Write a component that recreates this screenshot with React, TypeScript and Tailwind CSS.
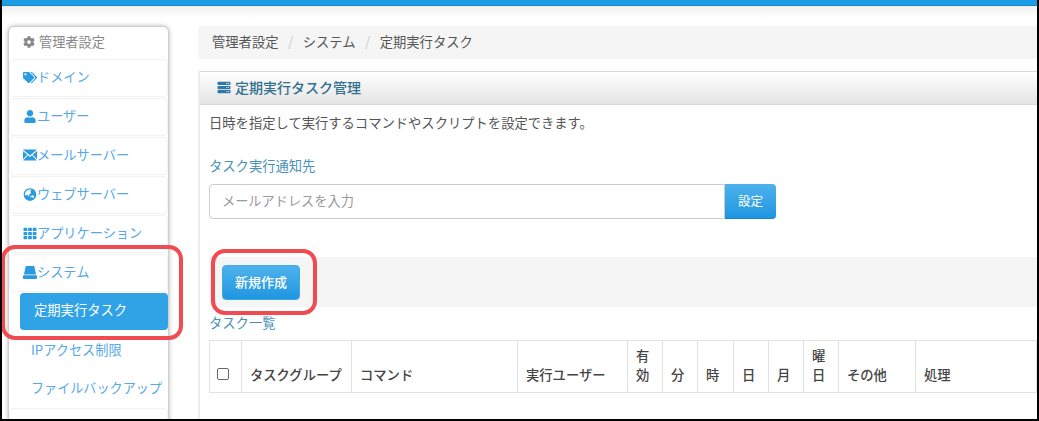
import { FaCog, FaGlobeAsia, FaServer, FaTags, FaTh, FaUser } from 'react-icons/fa';

const font = { fontFamily: '"Noto Sans CJK JP", "Liberation Sans", sans-serif' };

function EnvelopeIcon() {
  return (
    <svg viewBox="0 0 14 12" className="w-[14px] h-[12px]" fill="currentColor">
      <path d="M0 0.5h14L7 6.5z" />
      <path d="M0 2v8.2l4.3-4.5z" />
      <path d="M14 2v8.2L9.700 5.700z" />
      <path d="M5 6.300 7 8l2-1.700 4.800 5.200H0.200z" />
    </svg>
  );
}

function HddIcon() {
  return (
    <svg viewBox="0 0 14 13" className="w-[14px] h-[13px]" fill="currentColor">
      <path d="M2.800 0h8.400l1.900 8.400H0.900z" />
      <path d="M0.800 9.300h12.400a.8.8 0 0 1 .8.8v2.100a.8.8 0 0 1-.8.8H.8a.8.8 0 0 1-.8-.8v-2.100a.8.8 0 0 1 .8-.8z" />
    </svg>
  );
}

const navItems = [
  { label: 'ドメイン', icon: <FaTags className="w-[14px] h-[13px]" /> },
  { label: 'ユーザー', icon: <FaUser className="w-[14px] h-[13px]" /> },
  { label: 'メールサーバー', icon: <EnvelopeIcon /> },
  { label: 'ウェブサーバー', icon: <FaGlobeAsia className="w-[14px] h-[13px]" /> },
  { label: 'アプリケーション', icon: <FaTh className="w-[14px] h-[13px]" /> },
];

const columns = [
  { label: 'タスクグループ', width: 'w-[110px]' },
  { label: 'コマンド', width: 'w-[166px]' },
  { label: '実行ユーザー', width: 'w-[110px]' },
  { label: '有効', width: 'w-[35px]' },
  { label: '分', width: 'w-[35px]' },
  { label: '時', width: 'w-[36px]' },
  { label: '日', width: 'w-[35px]' },
  { label: '月', width: 'w-[35px]' },
  { label: '曜日', width: 'w-[35px]' },
  { label: 'その他', width: 'w-[77px]' },
  { label: '処理', width: '' },
];

function NavRow({ label, icon }: { label: string; icon: React.ReactNode }) {
  return (
    <div className="h-[38px] mb-px pb-[2px] flex items-center pl-[13px] rounded border border-[#f2f2f2] text-[#56a8e8] text-[13.2px]">
      <span className="text-[#2a9be0] flex items-center">{icon}</span>
      <span>{label}</span>
    </div>
  );
}

export default function App() {
  return (
    <div className="relative w-[1039px] h-[421px] overflow-hidden bg-white border-x-2 border-b-2 border-black" style={font}>
      <div className="h-[6px] bg-[#1c9ce5] border-b border-[#1787c8]" />
      <div className="h-[12px] bg-gradient-to-b from-[#f0f0f0] to-white" />

      <div className="flex items-start">
        {/* Sidebar */}
        <aside className="ml-[6px] mt-[8px] w-[161px] h-[420px] shrink-0 rounded-md bg-white border border-[#d0d0d0] shadow-[0_0_4px_rgba(0,0,0,0.3)]">
          <div className="h-[32px] pb-[2px] flex items-center gap-[4px] pl-[14px] text-[#888] text-[13.2px]">
            <FaCog className="w-[12px] h-[12px]" />
            <span>管理者設定</span>
          </div>
          {navItems.map((item) => (
            <NavRow key={item.label} label={item.label} icon={item.icon} />
          ))}
          <NavRow label="システム" icon={<HddIcon />} />
          <div className="ml-[11px] mt-px h-[37px] w-[148px] pb-[3px] flex items-center pl-[14px] rounded bg-[#2fa3e6] text-white text-[13.3px]">
            定期実行タスク
          </div>
          <div className="h-[39px] pt-[9px] pl-[22px] text-[#56a8e8] text-[13.2px]">
            <span className="block leading-[22px]">IPアクセス制限</span>
          </div>
          <div className="h-[39px] pt-[8px] pl-[22px] text-[#56a8e8] text-[13.1px]">
            <span className="block leading-[22px] whitespace-nowrap">ファイルバックアップ</span>
          </div>
          <div className="h-[30px] rounded border border-[#f2f2f2]" />
        </aside>

        {/* Main */}
        <main className="ml-[29px] mt-[8px] flex-1 min-w-0">
          <div className="h-[33px] pb-[2px] flex items-center gap-[9.5px] pl-[14px] rounded-l bg-[#f5f5f5] text-[#555] text-[13.3px]">
            <span>管理者設定</span>
            <span className="text-[#ccc]">/</span>
            <span>システム</span>
            <span className="text-[#ccc]">/</span>
            <span>定期実行タスク</span>
          </div>

          <section className="mt-[12px] border-l-2 border-[#ececec] h-[360px]">
            <div className="h-[34px] pb-[2px] flex items-center gap-[4px] pl-[17px] border-y border-[#d8d8d8] bg-gradient-to-b from-white to-[#e4e4e4] text-[#31708f] text-[14px] font-medium">
              <FaServer className="w-[14px] h-[13px] text-[#2f78a8]" />
              <span>定期実行タスク管理</span>
            </div>
            <div className="pl-[9px]">
              <p className="mt-[8px] h-[20px] leading-[20px] text-[#555] text-[13.3px]">
                日時を指定して実行するコマンドやスクリプトを設定できます。
              </p>
              <p className="mt-[23px] h-[20px] leading-[20px] text-[#4a90b8] text-[13.3px]">タスク実行通知先</p>
              <div className="mt-[8px] flex">
                <input
                  className="w-[516px] h-[35px] px-[12px] pb-[2px] rounded-l border border-[#ccc] outline-none text-[13.2px] placeholder:text-[#999]"
                  placeholder="メールアドレスを入力"
                  style={font}
                />
                <button className="w-[51px] h-[35px] rounded-r bg-gradient-to-b from-[#4db2ec] to-[#1c96e0] border-b border-[#1787c8] text-white text-[12.5px]">
                  設定
                </button>
              </div>
              <div className="mt-[38px] h-[50px] flex items-center pl-[13px] bg-[#f5f5f5]">
                <button className="w-[78px] h-[35px] rounded bg-gradient-to-b from-[#4db2ec] to-[#1c96e0] border border-[#3fa8e6] text-white text-[13px] font-medium">
                  新規作成
                </button>
              </div>
              <p className="mt-[6px] h-[20px] leading-[20px] text-[#4a90b8] text-[13.3px]">タスク一覧</p>
              <table className="mt-[7px] w-[828px] table-fixed border-collapse border border-[#e2e2e2] text-[#444] text-[13.3px]">
                <thead>
                  <tr className="h-[52px]">
                    <th className="w-[32px] border border-[#e2e2e2] align-bottom pb-[12px] font-medium">
                      <span className="block ml-[7px] w-[12px] h-[12px] rounded-[2px] border border-[#666]" />
                    </th>
                    {columns.map((col) => (
                      <th
                        key={col.label}
                        className={`${col.width} border border-[#e2e2e2] align-bottom text-left pl-[8px] pr-[5px] pb-[8px] leading-[19px] font-medium`}
                      >
                        {col.label}
                      </th>
                    ))}
                  </tr>
                </thead>
              </table>
            </div>
          </section>
        </main>
      </div>

      {/* Callouts */}
      <div className="absolute left-[-1px] top-[245px] w-[182px] h-[95px] rounded-[14px] border-[4px] border-[#f04b50]" />
      <div className="absolute left-[209px] top-[249px] w-[106px] h-[66px] rounded-[14px] border-[4px] border-[#f04b50]" />
    </div>
  );
}
